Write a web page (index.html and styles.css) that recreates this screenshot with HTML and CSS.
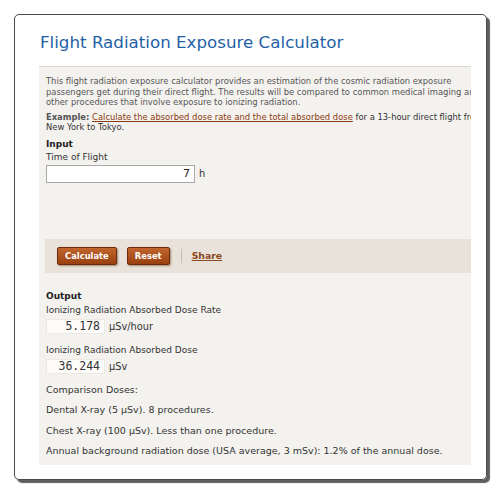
FILE: index.html
```
<html>
    <head>
        <meta charset='utf-8'/>
        <title>Flight Radiation Exposure Calculator</title>
        <link rel="stylesheet" href="styles.css">
    </head>
    <body>
        <div class="frame">
            <h1 class="title">Flight Radiation Exposure Calculator</h1>
            <div class="calc">
                <div class="intro">
                    <p class="desc">This flight radiation exposure calculator provides an estimation of the cosmic radiation exposure passengers get during their direct flight. The results will be compared to common medical imaging and other procedures that involve exposure to ionizing radiation.</p>
                    <p class="example"><b>Example:</b> <a href="#">Calculate the absorbed dose rate and the total absorbed dose</a> for a 13-hour direct flight from New York to Tokyo.</p>
                </div>
                <div class="input">
                    <div class="head">Input</div>
                    <div class="label">Time of Flight</div>
                    <div class="row"><input type="text" class="field" value="7"><span class="unit">h</span></div>
                </div>
                <div class="bar">
                    <button class="btn">Calculate</button>
                    <button class="btn">Reset</button>
                    <span class="sep"></span>
                    <a href="#" class="share">Share</a>
                </div>
                <div class="output">
                    <div class="head">Output</div>
                    <div class="label">Ionizing Radiation Absorbed Dose Rate</div>
                    <div class="row"><span class="value">5.178</span><span class="unit">μSv/hour</span></div>
                    <div class="label">Ionizing Radiation Absorbed Dose</div>
                    <div class="row"><span class="value">36.244</span><span class="unit">μSv</span></div>
                    <p class="cmp">Comparison Doses:</p>
                    <p class="cmp">Dental X-ray (5 µSv). 8 procedures.</p>
                    <p class="cmp">Chest X-ray (100 µSv). Less than one procedure.</p>
                    <p class="cmp">Annual background radiation dose (USA average, 3 mSv): 1.2% of the annual dose.</p>
                </div>
            </div>
        </div>
    </body>
</html>
```
FILE: styles.css
```
body{margin: 0; background-color: #ffffff; font-family: "DejaVu Sans", Verdana, sans-serif; color: #333333;}
.frame{margin: 14px 0 0 14px; width: 471px; height: 464px; border: 1px solid #4a4a4a; border-radius: 5px; box-shadow: 3px 3px 1px #5e5e5e; overflow: hidden;}
.title{margin: 16px 0 0 25px; font-size: 16.7px; font-weight: normal; color: #1f5fa6; height: 35px; line-height: 22px;}
.calc{margin-left: 24px; width: 432px; height: 398px; background-color: #f4f2ef; border-top: 1px solid #dcd8d4; overflow: hidden;}
.intro{width: 448px; padding: 9px 0 0 7px; font-size: 8.4px;}
.intro p{margin: 0 0 4px 0; line-height: 10.5px;}
.desc{color: #555555;}
.example b{color: #555555;}
.example a{color: #8a3a10;}
.input{padding-left: 7px; height: 102px;}
.head{font-size: 9px; font-weight: bold; color: #222222; line-height: 14px;}
.label{font-size: 9px; line-height: 13px; color: #333333;}
.row{display: flex; align-items: center; gap: 4px;}
.input .row{margin-top: 1px;}
.field{width: 149px; height: 18px; box-sizing: border-box; border: 1px solid #a8a8a8; text-align: right; font-family: "DejaVu Sans", sans-serif; font-size: 11px; padding: 0 4px; color: #222;}
.unit{font-size: 9.8px;}
.bar{margin-left: 6px; height: 34px; background-color: #e9e2da; display: flex; align-items: center; padding-left: 12px; gap: 10px;}
.btn{height: 18px; padding: 0 7px; border: 1px solid #6e2a0a; border-radius: 2px; background: linear-gradient(#c2652e, #98400f); color: #ffffff; font-family: "DejaVu Sans", sans-serif; font-weight: bold; font-size: 8.4px; box-shadow: 1px 1px 2px #a08a78;}
.sep{width: 1px; height: 14px; background-color: #c8bdb2; margin-left: 1px;}
.share{color: #8a4a20; font-weight: bold; font-size: 9.3px;}
.output{padding: 16px 0 0 7px;}
.value{display: inline-block; width: 59px; height: 15px; box-sizing: border-box; background-color: #fdfcfb; border: 1px solid #ece8e4; text-align: right; font-family: "DejaVu Sans Mono", monospace; font-size: 11.5px; line-height: 13px; padding-right: 4px;}
.output .label{line-height: 14px;}
.output .row{margin: 2px 0 9px 0;}
.cmp{margin: 0 0 7.5px 0; font-size: 9.5px; line-height: 13px;}
```
